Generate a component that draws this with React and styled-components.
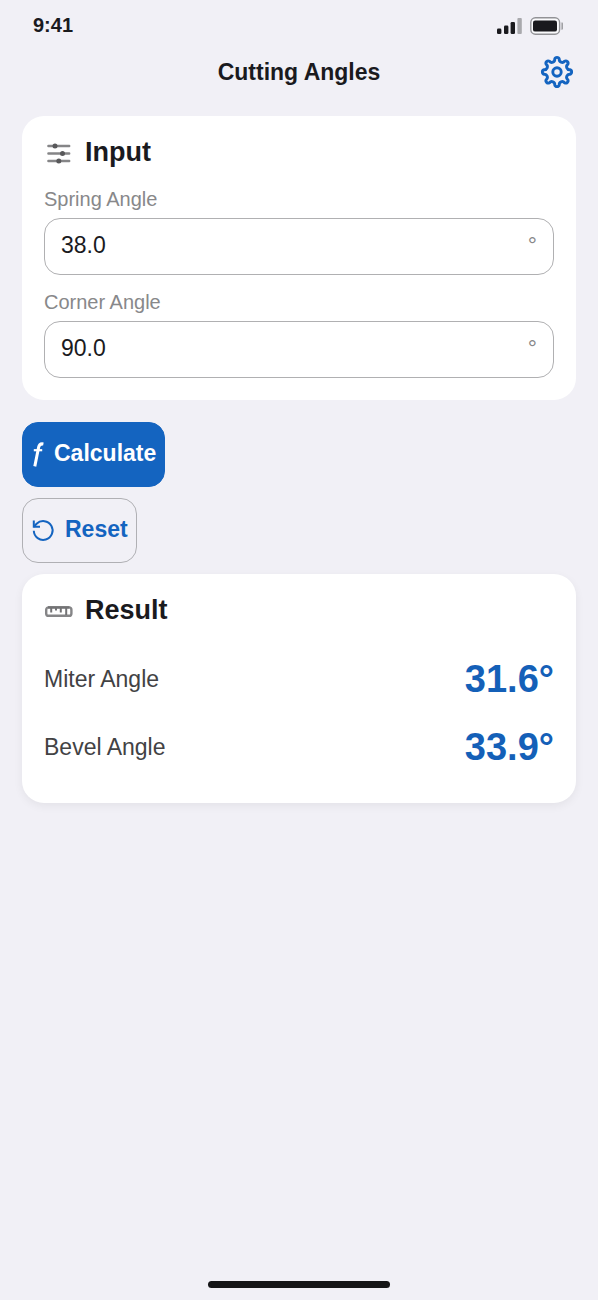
import React, { useState } from "react";
import styled, { createGlobalStyle } from "styled-components";

const GlobalStyle = createGlobalStyle`
  * {
    box-sizing: border-box;
  }

  body {
    margin: 0;
    background: #f1f0f6;
    color: #1a1a1e;
    font-family: "Liberation Sans", Arial, sans-serif;
  }

  h1, h2, p, dl, dd {
    margin: 0;
  }

  button, input {
    font-family: inherit;
  }
`;

const Screen = styled.div`
  min-height: 100vh;
  display: flex;
  flex-direction: column;
`;

const StatusBar = styled.div`
  display: flex;
  justify-content: space-between;
  align-items: center;
  height: 50px;
  padding: 0 34px 0 33px;
  font-size: 20px;
  font-weight: bold;

  svg {
    display: block;
  }
`;

const StatusIcons = styled.div`
  display: flex;
  align-items: center;
  gap: 8px;
  padding-top: 1px;
`;

const NavBar = styled.header`
  display: grid;
  grid-template-columns: 1fr auto 1fr;
  align-items: center;
  height: 44px;
  padding: 0 24px;

  h1 {
    grid-column: 2;
    font-size: 23px;
    line-height: 26px;
  }
`;

const IconButton = styled.button`
  justify-self: end;
  padding: 0;
  border: none;
  background: none;
  color: #1464c0;
  cursor: pointer;

  svg {
    display: block;
  }
`;

const Content = styled.main`
  flex: 1;
  display: flex;
  flex-direction: column;
  padding: 22px;
`;

const Card = styled.section`
  padding: 20px 22px 22px;
  border-radius: 22px;
  background: #fff;
  box-shadow: ${(props) => (props.$raised ? "0 3px 10px rgba(0, 0, 0, 0.06)" : "none")};
`;

const CardTitle = styled.div`
  display: flex;
  align-items: center;
  gap: 11px;
  margin-bottom: 19px;

  h2 {
    font-size: 27px;
    line-height: 32px;
  }

  svg {
    margin-top: 2px;
  }
`;

const Field = styled.div`
  & + & {
    margin-top: 15px;
  }

  label {
    display: block;
    margin-bottom: 7px;
    color: #88888a;
    font-size: 20px;
    line-height: 24px;
  }
`;

const InputBox = styled.div`
  display: flex;
  align-items: center;
  height: 57px;
  padding: 0 16px 2px;
  border: 1px solid #b0b0b2;
  border-radius: 16px;

  input {
    flex: 1;
    min-width: 0;
    padding: 0;
    border: none;
    outline: none;
    background: none;
    color: #1a1a1e;
    font-size: 23px;
  }

  span {
    color: #88888a;
    font-size: 23px;
  }
`;

const Actions = styled.div`
  display: flex;
  flex-direction: column;
  align-items: flex-start;
  gap: 11px;
  margin: 22px 0 11px;
`;

const Button = styled.button`
  display: flex;
  align-items: center;
  gap: 10px;
  height: 65px;
  padding: 0 8px 2px;
  border: 1px solid ${(props) => (props.$primary ? "#1464c0" : "#b0b0b4")};
  border-radius: 16px;
  background: ${(props) => (props.$primary ? "#1464c0" : "transparent")};
  color: ${(props) => (props.$primary ? "#fff" : "#1464c0")};
  font-size: 23px;
  font-weight: bold;
  cursor: pointer;
`;

const Results = styled.dl`
  div {
    display: flex;
    justify-content: space-between;
    align-items: center;
    height: 68px;
  }

  dt {
    color: #424244;
    font-size: 23px;
  }

  dd {
    color: #1460b8;
    font-size: 38px;
    font-weight: bold;
  }
`;

const HomeIndicator = styled.div`
  width: 182px;
  height: 7px;
  margin: 0 auto 12px;
  border-radius: 4px;
  background: #151517;
`;

const SignalIcon = () => (
  <svg width="26" height="18" viewBox="0 0 26 18" fill="#1a1a1e">
    <rect x="1" y="11.6" width="4.4" height="5.4" rx="1.3" />
    <rect x="8" y="8.4" width="4.4" height="8.6" rx="1.3" />
    <rect x="14.6" y="5" width="4.4" height="12" rx="1.3" />
    <rect x="21.4" y="1" width="4.4" height="16" rx="1" fill="#a9a9ad" />
  </svg>
);

const BatteryIcon = () => (
  <svg width="34" height="18" viewBox="0 0 34 18">
    <rect x="0.8" y="0.8" width="28.8" height="16.4" rx="4.6" fill="#fafafc" stroke="#929296" strokeWidth="1.4" />
    <rect x="3" y="3.4" width="24" height="11.2" rx="2.2" fill="#1a1a1e" />
    <path d="M31.4 5.4h.6c.8 0 1 .5 1 1.2v5c0 .7-.2 1.2-1 1.2h-.6z" fill="#a0a0a4" />
  </svg>
);

const toothPoint = (degrees) => {
  const angle = (degrees * Math.PI) / 180;
  return `${(17 + 13.1 * Math.sin(angle)).toFixed(2)} ${(17 - 13.1 * Math.cos(angle)).toFixed(2)}`;
};

// eight rounded teeth joined by hollow arcs
const gearPath =
  `M${toothPoint(-10)}` +
  Array.from({ length: 8 }, (_, i) => {
    const start = i * 45;
    return `A2.35 2.35 0 0 1 ${toothPoint(start + 10)}A2.95 2.95 0 0 0 ${toothPoint(start + 35)}`;
  }).join("") +
  "Z";

const GearIcon = () => (
  <svg width="34" height="34" viewBox="0 0 34 34" fill="none" stroke="currentColor" strokeWidth="2.9" strokeLinejoin="round">
    <path d={gearPath} />
    <circle cx="17" cy="17" r="4.2" />
  </svg>
);

const SlidersIcon = () => (
  <svg width="30" height="24" viewBox="0 0 30 24">
    <path d="M4.4 5H25.2M4.4 12.5H25.2M4.4 20H25.2" stroke="#858587" strokeWidth="2.4" strokeLinecap="round" />
    <g fill="#58585a">
      <circle cx="11" cy="5" r="2.5" />
      <circle cx="18.5" cy="12.5" r="2.5" />
      <circle cx="14.8" cy="20" r="2.5" />
    </g>
  </svg>
);

const RulerIcon = () => (
  <svg width="30" height="24" viewBox="0 0 30 24" fill="none" stroke="#858587" strokeWidth="2.4">
    <rect x="2.2" y="8.4" width="25.2" height="8.4" rx="2.4" />
    <path d="M7.2 8v5.4M12 8v3.6M16.8 8v5.4M22.2 8v8" stroke="#737375" strokeWidth="2" />
    <path d="M4 8.4H25.4" stroke="#737375" />
  </svg>
);

const FunctionIcon = () => (
  <svg width="13" height="26" viewBox="0 0 13 26" fill="none" stroke="currentColor">
    <path d="M12.4 3C9.4 2.4 8.2 3.4 7.6 6.4L3.8 25.4" strokeWidth="3" />
    <path d="M2.8 9.2H11.2" strokeWidth="2.2" />
  </svg>
);

const ResetIcon = () => (
  <svg width="24" height="24" viewBox="0 0 24 24" fill="none" stroke="currentColor" strokeWidth="2">
    <path d="M2.8 12.8A9.4 9.4 0 1 0 5.6 5.8L2.8 8.8" />
    <path d="M2.8 2.6V8.8H9" />
  </svg>
);

const AngleField = ({ id, label, value, onChange }) => (
  <Field>
    <label htmlFor={id}>{label}</label>
    <InputBox>
      <input id={id} inputMode="decimal" value={value} onChange={(e) => onChange(e.target.value)} />
      <span>°</span>
    </InputBox>
  </Field>
);

const getAngles = (spring, corner) => {
  const s = (parseFloat(spring) * Math.PI) / 180;
  const c = (parseFloat(corner) * Math.PI) / 360;
  return {
    miter: (Math.atan(Math.sin(s) / Math.tan(c)) * 180) / Math.PI,
    bevel: (Math.asin(Math.cos(s) * Math.cos(c)) * 180) / Math.PI,
  };
};

const App = () => {
  const [spring, setSpring] = useState("38.0");
  const [corner, setCorner] = useState("90.0");
  const [result, setResult] = useState(getAngles("38.0", "90.0"));

  const reset = () => {
    setSpring("38.0");
    setCorner("90.0");
    setResult(getAngles("38.0", "90.0"));
  };

  return (
    <Screen>
      <GlobalStyle />
      <StatusBar>
        <span>9:41</span>
        <StatusIcons>
          <SignalIcon />
          <BatteryIcon />
        </StatusIcons>
      </StatusBar>
      <NavBar>
        <h1>Cutting Angles</h1>
        <IconButton aria-label="Settings">
          <GearIcon />
        </IconButton>
      </NavBar>
      <Content>
        <Card>
          <CardTitle>
            <SlidersIcon />
            <h2>Input</h2>
          </CardTitle>
          <AngleField id="spring" label="Spring Angle" value={spring} onChange={setSpring} />
          <AngleField id="corner" label="Corner Angle" value={corner} onChange={setCorner} />
        </Card>
        <Actions>
          <Button $primary onClick={() => setResult(getAngles(spring, corner))}>
            <FunctionIcon />
            Calculate
          </Button>
          <Button onClick={reset}>
            <ResetIcon />
            Reset
          </Button>
        </Actions>
        <Card $raised>
          <CardTitle>
            <RulerIcon />
            <h2>Result</h2>
          </CardTitle>
          <Results>
            <div>
              <dt>Miter Angle</dt>
              <dd>{result.miter.toFixed(1)}°</dd>
            </div>
            <div>
              <dt>Bevel Angle</dt>
              <dd>{result.bevel.toFixed(1)}°</dd>
            </div>
          </Results>
        </Card>
      </Content>
      <HomeIndicator />
    </Screen>
  );
};

export default App;
